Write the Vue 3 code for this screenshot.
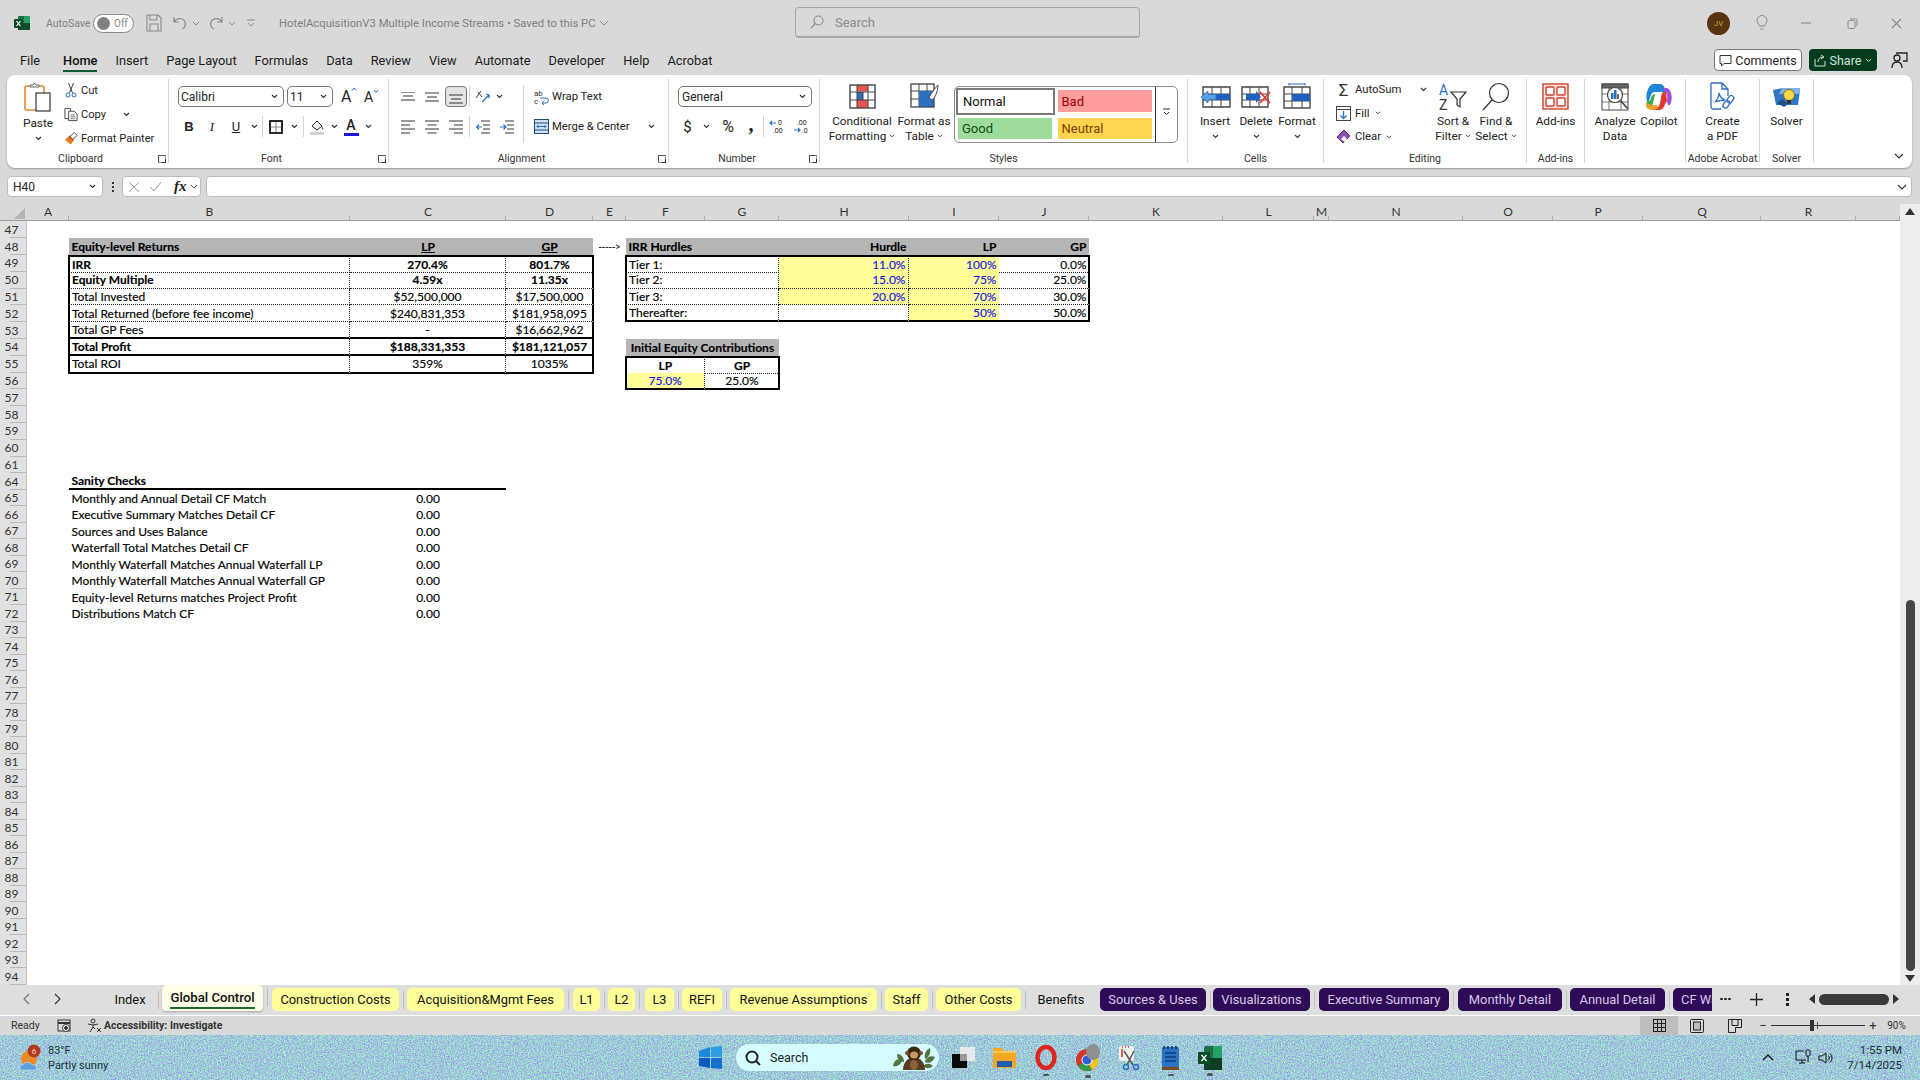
<script setup>
const menu = ['File','Home','Insert','Page Layout','Formulas','Data','Review','View','Automate','Developer','Help','Acrobat']
const colWidths = [42,281,156,87,33,79,74,130,90,90,134,91,15,134,90,90,118,95,44]
const letters = 'ABCDEFGHIJKLMNOPQR'.split('').concat([''])
const cols = colWidths.map(w => w + 'px').join(' ')
const idx = l => letters.indexOf(l) + 2
const c = (col, text, cls = '', span = 1) => ({ col, text, cls, span })
const table = {
  48: [c('B','Equity-level Returns','hd b'),c('C','LP','hd b ctr u'),c('D','GP','hd b ctr u'),c('E','----->','ctr arrow'),c('F','IRR Hurdles','hd b',2),c('H','Hurdle','hd b rgt'),c('I','LP','hd b rgt'),c('J','GP','hd b rgt')],
  49: [c('B','IRR','b tL tT dR dB'),c('C','270.4%','b ctr tT dR dB'),c('D','801.7%','b ctr tT tR dB'),c('F','Tier 1:','tL tT dR dB',2),c('H','11.0%','yel blue rgt tT dR dB'),c('I','100%','yel blue rgt tT dB'),c('J','0.0%','rgt tT tR dB')],
  50: [c('B','Equity Multiple','b tL dR dB'),c('C','4.59x','b ctr dR dB'),c('D','11.35x','b ctr tR dB'),c('F','Tier 2:','tL dR dB',2),c('H','15.0%','yel blue rgt dR dB'),c('I','75%','yel blue rgt dB'),c('J','25.0%','rgt tR dB')],
  51: [c('B','Total Invested','tL dR dB'),c('C','$52,500,000','ctr dR dB'),c('D','$17,500,000','ctr tR dB'),c('F','Tier 3:','tL dR dB',2),c('H','20.0%','yel blue rgt dR dB'),c('I','70%','yel blue rgt dB'),c('J','30.0%','rgt tR dB')],
  52: [c('B','Total Returned (before fee income)','tL dR dB'),c('C','$240,831,353','ctr dR dB'),c('D','$181,958,095','ctr tR dB'),c('F','Thereafter:','tL dR tB',2),c('H','','dR tB'),c('I','50%','yel blue rgt tB'),c('J','50.0%','rgt tR tB')],
  53: [c('B','Total GP Fees','tL dR sB'),c('C','-','ctr dR sB'),c('D','$16,662,962','ctr tR sB')],
  54: [c('B','Total Profit','b tL dR sB'),c('C','$188,331,353','b ctr dR sB'),c('D','$181,121,057','b ctr tR sB'),c('F','Initial Equity Contributions','hd b ctr',2)],
  55: [c('B','Total ROI','tL dR tB'),c('C','359%','ctr dR tB'),c('D','1035%','ctr tR tB'),c('F','LP','b ctr tL tT dR dB'),c('G','GP','b ctr tT tR dB')],
  56: [c('F','75.0%','yel blue ctr tL dR tB'),c('G','25.0%','ctr tR tB')],
  64: [c('B','Sanity Checks','b sB'),c('C','','sB')]
}
const sanity = ['Monthly and Annual Detail CF Match','Executive Summary Matches Detail CF','Sources and Uses Balance','Waterfall Total Matches Detail CF','Monthly Waterfall Matches Annual Waterfall LP','Monthly Waterfall Matches Annual Waterfall GP','Equity-level Returns matches Project Profit','Distributions Match CF']
sanity.forEach((s, i) => { table[65 + i] = [c('B', s), c('C', '0.00', 'ctr')] })
const rowNums = []
for (let n = 47; n <= 94; n++) if (n !== 62 && n !== 63) rowNums.push(n)
const rows = rowNums.map(n => ({ n, cells: table[n] || [], style: { height: (n < 62 ? 16.8 : 16.5) + 'px' } }))
const cellStyle = x => ({ gridColumn: idx(x.col) - 1 + ' / span ' + x.span })

const rawTabs = [
  ['Index',106,48,'plain'],['Global Control',162,101,'active'],['Construction Costs',272,127,'yellow'],['Acquisition&Mgmt Fees',407,157,'yellow'],['L1',573,27,'yellow'],['L2',608,27,'yellow'],['L3',645,29,'yellow'],['REFI',682,40,'yellow'],['Revenue Assumptions',730,147,'yellow'],['Staff',885,43,'yellow'],['Other Costs',936,85,'yellow'],['Benefits',1024,74,'plain'],['Sources & Uses',1100,106,'purple'],['Visualizations',1213,97,'purple'],['Executive Summary',1319,130,'purple'],['Monthly Detail',1458,104,'purple'],['Annual Detail',1570,95,'purple'],['CF Waterfall',1673,80,'purple']
]
const tabs = rawTabs.map((t, i) => {
  const prevEnd = i ? rawTabs[i - 1][1] + rawTabs[i - 1][2] : 90
  return { name: t[0], kind: t[3], style: { width: t[2] + 'px', marginLeft: t[1] - prevEnd + 'px' } }
})
</script>

<template>
  <div class="app">
    <header class="title">
      <div class="tleft">
        <svg class="xl" width="16" height="16" viewBox="0 0 16 16"><rect x="4" y="1" width="12" height="14" rx="1" fill="#1d6f42"/><rect x="10" y="1" width="6" height="7" fill="#21a366"/><rect x="4" y="8" width="12" height="7" fill="#124a2c"/><rect x="0" y="4" width="9" height="9" rx="1" fill="#0b4a26"/><path d="M2.5 6l4 5M6.5 6l-4 5" stroke="#fff" stroke-width="1.2"/></svg>
        <span class="asave">AutoSave</span>
        <span class="toggle"><i></i><b>Off</b></span>
        <svg class="qs" width="16" height="18" viewBox="0 0 16 18" fill="none" stroke="#8a8a8a" stroke-width="1.1"><path d="M1 1h11l3 3v13H1z"/><path d="M4 1v5h7V1M4 17v-7h8v7"/></svg>
        <svg class="qu" width="16" height="16" viewBox="0 0 16 16" fill="none" stroke="#8a8a8a" stroke-width="1.2"><path d="M2 2v5h5M2 7c2-3 5-4 8-3 3 1 4 4 3 7-.5 1.500-1.500 2.500-3 3"/></svg>
        <svg class="qc" width="8" height="5" viewBox="0 0 8 5" fill="none" stroke="#8a8a8a"><path d="M1 1l3 3 3-3"/></svg>
        <svg class="qr" width="16" height="16" viewBox="0 0 16 16" fill="none" stroke="#8a8a8a" stroke-width="1.2"><path d="M14 2v5H9M14 7c-2-3-5-4-8-3-3 1-4 4-3 7 .5 1.500 1.500 2.500 3 3"/></svg>
        <svg class="qc" width="8" height="5" viewBox="0 0 8 5" fill="none" stroke="#8a8a8a"><path d="M1 1l3 3 3-3"/></svg>
        <svg class="qz" width="10" height="10" viewBox="0 0 10 10" fill="none" stroke="#8a8a8a"><path d="M1 2h8M2 5l3 3 3-3"/></svg>
        <span class="fname">HotelAcquisitionV3 Multiple Income Streams  •  Saved to this PC</span>
        <svg class="qc2" width="10" height="6" viewBox="0 0 10 6" fill="none" stroke="#8a8a8a"><path d="M1 1l4 4 4-4"/></svg>
      </div>
      <div class="search">
        <svg width="14" height="14" viewBox="0 0 14 14" fill="none" stroke="#8a8a8a" stroke-width="1.1"><circle cx="8.500" cy="5.500" r="4.500"/><path d="M5 9l-4 4"/></svg>
        <span>Search</span>
      </div>
      <div class="tright">
        <span class="avatar">JV</span>
        <svg class="bulb" width="12" height="16" viewBox="0 0 12 16" fill="none" stroke="#8a8a8a"><path d="M3.500 11C3 9 1 8 1 5.500a5 5 0 0 1 10 0C11 8 9 9 8.500 11zM4.500 14h3"/></svg>
        <svg class="wmin" width="10" height="2" viewBox="0 0 10 2"><path d="M0 1h10" stroke="#9a9a9a" stroke-width="1.4"/></svg>
        <svg class="wmax" width="11" height="11" viewBox="0 0 11 11" fill="none" stroke="#8a8a8a"><rect x="1" y="2.500" width="7" height="8" rx="1.500"/><path d="M3 1h5.500a1.500 1.500 0 0 1 1.500 1.500V8"/></svg>
        <svg class="wcl" width="11" height="11" viewBox="0 0 11 11" stroke="#8a8a8a" stroke-width="1.1"><path d="M1 1l9 9M10 1l-9 9"/></svg>
      </div>
    </header>

    <nav class="menu">
      <ul>
        <li v-for="m in menu" :key="m" :class="{ on: m === 'Home' }">{{ m }}</li>
      </ul>
      <div class="mright">
        <span class="comments"><svg width="13" height="13" viewBox="0 0 13 13" fill="none" stroke="#333"><path d="M1 1.500h11v8H5l-2.500 2.500V9.500H1z"/></svg>Comments</span>
        <span class="share"><svg width="12" height="13" viewBox="0 0 12 13" fill="none" stroke="#cfe6d6"><path d="M1 5v7h10V7M4 8c0-3 2-5 5-5M7 1l3 2-3 2"/></svg>Share<svg width="7" height="5" viewBox="0 0 7 5" fill="none" stroke="#cfe6d6"><path d="M1 1l2.500 2.500L6 1"/></svg></span>
        <svg class="present" width="17" height="20" viewBox="0 0 17 20" fill="none" stroke="#222" stroke-width="1.300"><path d="M5 3h11v8h-4"/><circle cx="6" cy="8" r="3"/><path d="M1 18c0-4 2-6 5-6s5 2 5 6"/></svg>
      </div>
    </nav>

    <section class="ribbon">
      <!-- Clipboard -->
      <div class="grp g-clip">
        <div class="body clipb">
          <div class="big pastecol">
            <svg width="28" height="30" viewBox="0 0 28 30"><rect x="1" y="4" width="19" height="24" rx="1.500" fill="#fff" stroke="#e8862a" stroke-width="1.600"/><path d="M6 5V3h3l1.500-2L12 3h3v2z" fill="#fff" stroke="#666"/><rect x="12" y="11" width="14" height="18" fill="#fff" stroke="#444" stroke-width="1.300"/></svg>
            <span class="lbl pastel">Paste</span>
            <svg class="chev" width="7" height="5" viewBox="0 0 7 5"><path d="M1 1l2.500 2.500L6 1" fill="none" stroke="#333" stroke-width="1.100"/></svg>
          </div>
          <div class="small">
            <div class="srow"><svg width="12" height="16" viewBox="0 0 12 16" fill="none" stroke="#444"><path d="M3.500 1L7.500 11M8.500 1L4.500 11"/><circle cx="3" cy="13" r="2" stroke="#2a6fc0"/><circle cx="9" cy="13" r="2" stroke="#2a6fc0"/></svg><span>Cut</span></div>
            <div class="srow"><svg width="15" height="15" viewBox="0 0 15 15" fill="none" stroke="#444"><path d="M1 1h6v11H1z"/><path d="M5 4h6l3 3v7H5z" fill="#fff"/><path d="M7 8h5M7 10h5M7 12h5" stroke="#777"/></svg><span>Copy</span><svg class="copyc" width="7" height="5" viewBox="0 0 7 5"><path d="M1 1l2.500 2.500L6 1" fill="none" stroke="#333" stroke-width="1.100"/></svg></div>
            <div class="srow"><svg width="15" height="15" viewBox="0 0 15 15"><path d="M1 9l5-5 5 5-4 5z" fill="#ea7a28"/><path d="M6 6l5-5 3 3-5 5z" fill="none" stroke="#444"/></svg><span>Format Painter</span></div>
          </div>
        </div>
        <div class="glab lw">Clipboard<i class="launch"></i></div>
      </div>

      <!-- Font -->
      <div class="grp g-font">
        <div class="body stack">
          <div class="row r1">
            <span class="box fbox">Calibri<svg width="7" height="5" viewBox="0 0 7 5"><path d="M1 1l2.500 2.500L6 1" fill="none" stroke="#333" stroke-width="1.100"/></svg></span>
            <span class="box sbox">11<svg width="7" height="5" viewBox="0 0 7 5"><path d="M1 1l2.500 2.500L6 1" fill="none" stroke="#333" stroke-width="1.100"/></svg></span>
            <span class="ab big-a">A<svg width="6" height="4" viewBox="0 0 6 4"><path d="M1 3.500L3 1l2 2.500" fill="none" stroke="#2a6fc0"/></svg></span>
            <span class="ab small-a">A<svg width="6" height="4" viewBox="0 0 6 4"><path d="M1 1l2 2.500L5 1" fill="none" stroke="#2a6fc0"/></svg></span>
          </div>
          <div class="row r2">
            <span class="t w22 bold">B</span>
            <span class="t w24 ital">I</span>
            <span class="t w24 und">U</span>
            <span class="w12 ctrf"><svg width="7" height="5" viewBox="0 0 7 5"><path d="M1 1l2.500 2.500L6 1" fill="none" stroke="#333" stroke-width="1.100"/></svg></span>
            <i class="vsep"></i>
            <span class="w22 ctrf"><svg width="14" height="14" viewBox="0 0 14 14" fill="none"><rect x="1" y="1" width="12" height="12" stroke="#111" stroke-width="1.800"/><path d="M7 2v10M2 7h10" stroke="#888"/></svg></span>
            <span class="w14 ctrf"><svg width="7" height="5" viewBox="0 0 7 5"><path d="M1 1l2.500 2.500L6 1" fill="none" stroke="#333" stroke-width="1.100"/></svg></span>
            <i class="vsep"></i>
            <span class="w22 ctrf"><svg width="15" height="16" viewBox="0 0 15 16"><path d="M2 7l5-5 5 5-5 4z" fill="none" stroke="#222"/><path d="M12 7c1 2 2 2.500 1 3.500-1 .5-1.500-1-1-3.500z" fill="#2a6fc0"/><rect x="0" y="13" width="14" height="3" fill="#d0d0d0"/></svg></span>
            <span class="w12 ctrf"><svg width="7" height="5" viewBox="0 0 7 5"><path d="M1 1l2.500 2.500L6 1" fill="none" stroke="#333" stroke-width="1.100"/></svg></span>
            <span class="w22 colA"><b>A</b><i></i></span>
            <span class="w12 ctrf"><svg width="7" height="5" viewBox="0 0 7 5"><path d="M1 1l2.500 2.500L6 1" fill="none" stroke="#333" stroke-width="1.100"/></svg></span>
          </div>
        </div>
        <div class="glab lw">Font<i class="launch"></i></div>
      </div>

      <!-- Alignment -->
      <div class="grp g-align">
        <div class="body alignb">
          <div class="stack alignl">
            <div class="row r1">
              <span class="w24 ctrf"><svg width="14" height="10" viewBox="0 0 14 10" stroke="#333"><path d="M0 .5h14M2 4.500h10M0 8.500h14" transform="translate(0 -0.500)"/></svg></span>
              <span class="w24 ctrf"><svg width="14" height="10" viewBox="0 0 14 10" stroke="#333"><path d="M0 1h14M2 5h10M0 9h14"/></svg></span>
              <span class="w24 ctrf pressed"><svg width="14" height="10" viewBox="0 0 14 10" stroke="#333"><path d="M0 1h14M2 5h10M0 9h14"/></svg></span>
              <i class="vsep"></i>
              <span class="w24 ctrf"><svg width="16" height="14" viewBox="0 0 16 14" fill="none" stroke="#444"><path d="M1 8l5-7M3 2l4 5"/><path d="M7 12l7-7M11 4l3 1v3" stroke="#2a6fc0" stroke-width="1.300"/></svg></span>
              <span class="w8 ctrf"><svg width="7" height="5" viewBox="0 0 7 5"><path d="M1 1l2.500 2.500L6 1" fill="none" stroke="#333" stroke-width="1.100"/></svg></span>
            </div>
            <div class="row r2">
              <span class="w24 ctrf"><svg width="14" height="14" viewBox="0 0 14 14" stroke="#333"><path d="M0 1h14M0 5h9M0 9h14M0 13h9"/></svg></span>
              <span class="w24 ctrf"><svg width="14" height="14" viewBox="0 0 14 14" stroke="#333"><path d="M0 1h14M2.500 5h9M0 9h14M2.500 13h9"/></svg></span>
              <span class="w24 ctrf"><svg width="14" height="14" viewBox="0 0 14 14" stroke="#333"><path d="M0 1h14M5 5h9M0 9h14M5 13h9"/></svg></span>
              <i class="vsep"></i>
              <span class="w24 ctrf"><svg width="14" height="14" viewBox="0 0 14 14" fill="none" stroke="#333"><path d="M5 1h9M7 5h7M7 9h7M5 13h9"/><path d="M6 7H0M3 4.500L.5 7 3 9.500" stroke="#2a6fc0" stroke-width="1.200"/></svg></span>
              <span class="w24 ctrf"><svg width="14" height="14" viewBox="0 0 14 14" fill="none" stroke="#333"><path d="M5 1h9M7 5h7M7 9h7M5 13h9"/><path d="M0 7h6M3.500 4.500L6 7 3.500 9.500" stroke="#2a6fc0" stroke-width="1.200"/></svg></span>
            </div>
          </div>
          <i class="bigsep"></i>
          <div class="stack alignr">
            <div class="srow2"><svg width="15" height="16" viewBox="0 0 15 16" fill="none"><text x="0" y="7" font-size="8" font-family="Roboto" fill="#333">ab</text><text x="0" y="15" font-size="8" font-family="Roboto" fill="#333">c</text><path d="M6 9h6a2 2 0 0 1 0 5H8M10 12l-2 2 2 2" stroke="#2a6fc0"/></svg><span>Wrap Text</span></div>
            <div class="srow2 merge"><svg width="15" height="15" viewBox="0 0 15 15" fill="none" stroke="#1f4e79"><rect x=".5" y=".5" width="14" height="14" fill="#cfe0f3"/><path d="M.5 4h14M.5 11h14"/><path d="M3 7.500h9M4.500 6l-1.500 1.500L4.500 9M10.500 6l1.500 1.500L10.500 9" stroke="#2a6fc0"/></svg><span>Merge &amp; Center</span><svg class="mc" width="7" height="5" viewBox="0 0 7 5"><path d="M1 1l2.500 2.500L6 1" fill="none" stroke="#333" stroke-width="1.100"/></svg></div>
          </div>
        </div>
        <div class="glab lw">Alignment<i class="launch"></i></div>
      </div>

      <!-- Number -->
      <div class="grp g-num">
        <div class="body stack">
          <div class="row r1"><span class="box gbox">General<svg width="7" height="5" viewBox="0 0 7 5"><path d="M1 1l2.500 2.500L6 1" fill="none" stroke="#333" stroke-width="1.100"/></svg></span></div>
          <div class="row r2">
            <span class="t w24 numg">$</span>
            <span class="w12 ctrf"><svg width="7" height="5" viewBox="0 0 7 5"><path d="M1 1l2.500 2.500L6 1" fill="none" stroke="#333" stroke-width="1.100"/></svg></span>
            <span class="t w24 numg pct">%</span>
            <span class="t w22 numg comma">,</span>
            <i class="vsep"></i>
            <span class="w24 ctrf"><svg width="16" height="15" viewBox="0 0 16 15"><text x="9" y="6" font-size="7" font-family="Roboto" fill="#222">0</text><text x="4" y="14" font-size="7" font-family="Roboto" fill="#222">.00</text><path d="M7 4H1M3 2L1 4l2 2" fill="none" stroke="#2a6fc0" stroke-width="1.200"/></svg></span>
            <span class="w24 ctrf"><svg width="16" height="15" viewBox="0 0 16 15"><text x="4" y="6" font-size="7" font-family="Roboto" fill="#222">.00</text><text x="9" y="14" font-size="7" font-family="Roboto" fill="#222">.0</text><path d="M1 11h6M5 9l2 2-2 2" fill="none" stroke="#2a6fc0" stroke-width="1.200"/></svg></span>
          </div>
        </div>
        <div class="glab lw">Number<i class="launch"></i></div>
      </div>

      <!-- Styles -->
      <div class="grp g-sty">
        <div class="body styb">
          <div class="big w64">
            <div class="bi"><svg width="27" height="25" viewBox="0 0 27 25"><rect x="1" y="1" width="25" height="23" fill="#fff"/><rect x="8" y="1" width="11" height="6.500" fill="#e8564e"/><rect x="8" y="8" width="6" height="8" fill="#2a6fc0"/><rect x="8" y="16" width="11" height="8" fill="#e8564e"/><path d="M1 8h25M1 16h25M8 1v23M14 8v8M19 1v23" stroke="#444" stroke-width="1"/><rect x="1" y="1" width="25" height="23" fill="none" stroke="#444" stroke-width="1.400"/></svg></div>
            <span class="lbl">Conditional</span>
            <span class="lbl">Formatting<svg class="ch" width="6" height="4" viewBox="0 0 7 5"><path d="M1 1l2.500 2.500L6 1" fill="none" stroke="#333" stroke-width="1.200"/></svg></span>
          </div>
          <div class="big w56">
            <div class="bi"><svg width="29" height="28" viewBox="0 0 29 28"><rect x="1" y="1" width="23" height="23" fill="#fff"/><path d="M1 8h23M1 16h23M9 1v23M17 1v23" stroke="#444"/><rect x="9" y="8" width="15" height="16" fill="#2a6fc0"/><rect x="1" y="1" width="23" height="23" fill="none" stroke="#444" stroke-width="1.300"/><path d="M28 2c-3 3-8 10-9 13l3 2c3-2 6-9 6-15z" fill="#fff" stroke="#444"/><path d="M19 15c-3 0-4 2-4 5-1 2-3 2-4 2 3 3 9 3 11-5z" fill="#2a6fc0"/></svg></div>
            <span class="lbl">Format as</span>
            <span class="lbl">Table<svg class="ch" width="6" height="4" viewBox="0 0 7 5"><path d="M1 1l2.500 2.500L6 1" fill="none" stroke="#333" stroke-width="1.200"/></svg></span>
          </div>
          <div class="gallery">
            <div class="gcells">
              <span class="st normal">Normal</span><span class="st bad">Bad</span>
              <span class="st good">Good</span><span class="st neutral">Neutral</span>
            </div>
            <div class="gbtn"><svg width="9" height="8" viewBox="0 0 9 8" fill="none" stroke="#333"><path d="M1 1h7M2 4l2.500 2.500L7 4"/></svg></div>
          </div>
        </div>
        <div class="glab">Styles</div>
      </div>

      <!-- Cells -->
      <div class="grp g-cells">
        <div class="body cellb">
          <div class="big w40">
            <div class="bi"><svg width="31" height="22" viewBox="0 0 31 22"><path d="M3 1h27v20H3z" fill="#fff" stroke="#444" stroke-width="1.400"/><path d="M3 8h27M3 14h27M12 1v20M21 1v20" stroke="#444"/><rect x="12" y="8" width="18" height="6" fill="#1e5fc0"/><path d="M1 11l7-6v3.500h8v5H8V17z" fill="#5aa0e6" stroke="#2a6fc0" stroke-width=".8"/></svg></div>
            <span class="lbl">Insert</span>
            <svg class="chev" width="7" height="5" viewBox="0 0 7 5"><path d="M1 1l2.500 2.500L6 1" fill="none" stroke="#333" stroke-width="1.100"/></svg>
          </div>
          <div class="big w40">
            <div class="bi"><svg width="30" height="22" viewBox="0 0 30 22"><path d="M1 1h26v20H1z" fill="#fff" stroke="#444" stroke-width="1.400"/><path d="M1 8h26M1 14h26M9 1v20M18 1v20" stroke="#444"/><path d="M5 8h10V5l5 6-5 6v-3H5z" fill="#1e5fc0"/><path d="M19 6l10 11M29 6L19 17" stroke="#e8362a" stroke-width="1.700"/></svg></div>
            <span class="lbl">Delete</span>
            <svg class="chev" width="7" height="5" viewBox="0 0 7 5"><path d="M1 1l2.500 2.500L6 1" fill="none" stroke="#333" stroke-width="1.100"/></svg>
          </div>
          <div class="big w40 fmt">
            <div class="bi"><svg width="28" height="26" viewBox="0 0 28 26"><path d="M6 1h16M6 0v2.500M22 0v2.500" stroke="#2a6fc0"/><rect x="1" y="4" width="26" height="21" fill="#fff" stroke="#444" stroke-width="1.400"/><path d="M1 11h26M1 18h26M9 4v21M19 4v21" stroke="#444"/><rect x="9" y="11" width="18" height="7" fill="#1e5fc0"/></svg></div>
            <span class="lbl">Format</span>
            <svg class="chev" width="7" height="5" viewBox="0 0 7 5"><path d="M1 1l2.500 2.500L6 1" fill="none" stroke="#333" stroke-width="1.100"/></svg>
          </div>
        </div>
        <div class="glab">Cells</div>
      </div>

      <!-- Editing -->
      <div class="grp g-edit">
        <div class="body editb">
          <div class="small editl">
            <div class="srow3"><span class="sig">Σ</span><span>AutoSum</span><svg class="asc" width="7" height="5" viewBox="0 0 7 5"><path d="M1 1l2.500 2.500L6 1" fill="none" stroke="#333" stroke-width="1.100"/></svg></div>
            <div class="srow3"><svg width="15" height="15" viewBox="0 0 15 15" fill="none"><rect x=".5" y=".5" width="14" height="14" stroke="#444"/><path d="M.5 3.500h14" stroke="#444"/><path d="M7.500 5v7M4.500 9.500l3 3 3-3" stroke="#2a6fc0" stroke-width="1.300"/></svg><span>Fill</span><svg class="ch" width="6" height="4" viewBox="0 0 7 5"><path d="M1 1l2.500 2.500L6 1" fill="none" stroke="#333" stroke-width="1.200"/></svg></div>
            <div class="srow3"><svg width="15" height="15" viewBox="0 0 15 15"><path d="M8 1l6 6-7 7-6-6z" fill="#8c52b8" stroke="#5b2f86"/><path d="M5 10l3-3 3 3-2 3z" fill="#fff"/></svg><span>Clear</span><svg class="ch" width="6" height="4" viewBox="0 0 7 5"><path d="M1 1l2.500 2.500L6 1" fill="none" stroke="#333" stroke-width="1.200"/></svg></div>
          </div>
          <div class="big w44">
            <div class="bi"><svg width="30" height="30" viewBox="0 0 30 30"><text x="1" y="13" font-size="14" font-family="Roboto" fill="#2a6fc0">A</text><text x="1" y="28" font-size="14" font-family="Roboto" fill="#333">Z</text><path d="M13 10h15l-6 7v8l-3-2v-6z" fill="#fff" stroke="#333" stroke-width="1.200"/></svg></div>
            <span class="lbl">Sort &amp;</span>
            <span class="lbl">Filter<svg class="ch" width="6" height="4" viewBox="0 0 7 5"><path d="M1 1l2.500 2.500L6 1" fill="none" stroke="#333" stroke-width="1.200"/></svg></span>
          </div>
          <div class="big w44">
            <div class="bi"><svg width="30" height="30" viewBox="0 0 30 30" fill="none" stroke="#333" stroke-width="1.200"><circle cx="18" cy="11" r="9.500"/><path d="M11 18L2 28"/></svg></div>
            <span class="lbl">Find &amp;</span>
            <span class="lbl">Select<svg class="ch" width="6" height="4" viewBox="0 0 7 5"><path d="M1 1l2.500 2.500L6 1" fill="none" stroke="#333" stroke-width="1.200"/></svg></span>
          </div>
        </div>
        <div class="glab">Editing</div>
      </div>

      <!-- Add-ins -->
      <div class="grp g-add">
        <div class="body onec">
          <div class="big">
            <div class="bi"><svg width="27" height="27" viewBox="0 0 27 27" fill="#fff" stroke="#d0402a" stroke-width="1.400"><rect x="1" y="1" width="25" height="25" fill="#fbe3df"/><rect x="4" y="4" width="8" height="8" rx="1"/><rect x="15" y="4" width="8" height="8" rx="1"/><rect x="4" y="15" width="8" height="8" rx="1"/><rect x="15" y="15" width="8" height="8" rx="1"/></svg></div>
            <span class="lbl">Add-ins</span>
          </div>
        </div>
        <div class="glab">Add-ins</div>
      </div>

      <!-- Analyze -->
      <div class="grp g-ana">
        <div class="body anab">
          <div class="big w44">
            <div class="bi"><svg width="28" height="28" viewBox="0 0 28 28" fill="none" stroke="#444"><rect x="1" y="1" width="26" height="26" fill="#fff"/><rect x="1" y="1" width="26" height="4" fill="#666"/><path d="M1 11h26M1 19h26M8 5v22M20 5v22" stroke-width=".7"/><circle cx="14" cy="12" r="7.500" fill="#fff" stroke-width="1.200"/><rect x="10" y="10" width="2.500" height="6" fill="#2a6fc0" stroke="none"/><rect x="13" y="7" width="2.500" height="9" fill="#2a6fc0" stroke="none"/><rect x="16" y="11" width="2" height="5" fill="#666" stroke="none"/><path d="M19.500 17.500l7 8" stroke-width="1.600"/></svg></div>
            <span class="lbl">Analyze</span>
            <span class="lbl">Data</span>
          </div>
          <div class="big w44">
            <div class="bi"><svg width="28" height="28" viewBox="0 0 28 28"><path d="M8 1h7c3 0 4 2 5 5l1 3H10c-2 0-3 1-4 3l-2 6H2C0 12 3 2 8 1z" fill="#1f86d8"/><path d="M2 18h3l1-3c1-3 2-4 4-4l-2 9c-1 5-3 7-6 5-1-2-1-4 0-7z" fill="#3ea84b"/><path d="M1 20c0 4 2 7 6 7h7l-2-5H7z" fill="#f2a12b"/><path d="M17 5h5c5 2 6 11 3 17h-2l-1-4c1-4 0-10-5-13z" fill="#a04fd6"/><path d="M18 9h3l1 9-2 3c-1 4-3 6-6 6H9c4-1 5-4 6-7l1-5c0-3 1-5 2-6z" fill="#e0392d"/></svg></div>
            <span class="lbl">Copilot</span>
          </div>
        </div>
        <div class="glab">&nbsp;</div>
      </div>

      <!-- Adobe -->
      <div class="grp g-ado">
        <div class="body onec">
          <div class="big">
            <div class="bi"><svg width="26" height="30" viewBox="0 0 26 30" fill="none" stroke="#2a6fc0" stroke-width="1.300"><path d="M2 1h11l6 6v7M12 27H4a2 2 0 0 1-2-2V1M13 1v6h6"/><path d="M6 20c3-3 4-7 4-9 1 4 3 6 6 7-3 0-7 1-10 2z"/><rect x="15" y="18" width="5" height="8" rx="2.500" transform="rotate(35 17 22)"/><rect x="19" y="13" width="5" height="8" rx="2.500" transform="rotate(35 21 17)"/></svg></div>
            <span class="lbl">Create</span>
            <span class="lbl">a PDF</span>
          </div>
        </div>
        <div class="glab">Adobe Acrobat</div>
      </div>

      <!-- Solver -->
      <div class="grp g-sol">
        <div class="body onec">
          <div class="big">
            <div class="bi"><svg width="30" height="24" viewBox="0 0 30 24"><path d="M1 5l10-2 2 2h15l-2 15H4z" fill="#2f76c4"/><path d="M10 3h18v6H7z" fill="#7fb2e6"/><path d="M5 18l5-4 6 5-4 3z" fill="#1f4e8c"/><circle cx="17" cy="10" r="5.500" fill="#f6d64a" stroke="#8a6b10"/><rect x="15" y="15" width="4" height="4" fill="#333"/></svg></div>
            <span class="lbl">Solver</span>
          </div>
        </div>
        <div class="glab">Solver</div>
      </div>
      <svg class="collapse" width="10" height="6" viewBox="0 0 10 6" fill="none" stroke="#333" stroke-width="1.200"><path d="M1 1l4 4 4-4"/></svg>
    </section>

    <div class="fbar">
      <div class="namebox"><span>H40</span><svg width="7" height="5" viewBox="0 0 7 5"><path d="M1 1l2.500 2.500L6 1" fill="none" stroke="#333" stroke-width="1.200"/></svg></div>
      <div class="fdots"><i></i><i></i><i></i></div>
      <div class="fxbox">
        <svg width="12" height="12" viewBox="0 0 12 12" stroke="#999"><path d="M1 1l10 10M11 1L1 11"/></svg>
        <svg width="13" height="11" viewBox="0 0 13 11" fill="none" stroke="#999"><path d="M1 6l4 4 7-9"/></svg>
        <span class="fx">fx</span>
        <svg width="8" height="5" viewBox="0 0 8 5" fill="none" stroke="#555"><path d="M1 1l3 3 3-3"/></svg>
      </div>
      <div class="finput"><svg width="10" height="6" viewBox="0 0 10 6" fill="none" stroke="#333" stroke-width="1.100"><path d="M1 1l4 4 4-4"/></svg></div>
    </div>

    <main class="sheet">
      <div class="grid">
        <div class="colhead">
          <div class="corner"><i></i></div>
          <div class="letters" :style="{ gridTemplateColumns: cols }">
            <span v-for="l in letters" :key="l">{{ l }}</span>
          </div>
        </div>
        <div v-for="r in rows" :key="r.n" class="line" :style="r.style">
          <div class="rh">{{ r.n }}</div>
          <div class="cells" :style="{ gridTemplateColumns: cols }">
            <div v-for="x in r.cells" :key="x.col" class="c" :class="x.cls" :style="cellStyle(x)">{{ x.text }}</div>
          </div>
        </div>
      </div>
      <aside class="vscroll">
        <i class="tri up"></i>
        <div class="vtrack"><i class="vthumb"></i></div>
        <i class="tri dn"></i>
      </aside>
    </main>

    <div class="tabbar">
      <div class="tnav">
        <svg width="7" height="12" viewBox="0 0 7 12" fill="none" stroke="#777" stroke-width="1.200"><path d="M6 1L1 6l5 5"/></svg>
        <svg width="7" height="12" viewBox="0 0 7 12" fill="none" stroke="#333" stroke-width="1.200"><path d="M1 1l5 5-5 5"/></svg>
      </div>
      <div class="tstrip">
        <div v-for="t in tabs" :key="t.name" class="tab" :class="t.kind" :style="t.style"><span>{{ t.name }}</span></div>
      </div>
      <div class="tctl">
        <span class="more"><i></i><i></i><i></i></span>
        <svg class="plus" width="13" height="13" viewBox="0 0 13 13" stroke="#222" stroke-width="1.300"><path d="M6.500 0v13M0 6.500h13"/></svg>
        <span class="vdots"><i></i><i></i><i></i></span>
        <div class="hscroll"><i class="tl"></i><i class="hthumb"></i><i class="tr"></i></div>
      </div>
    </div>

    <footer class="status">
      <span class="ready">Ready</span>
      <svg class="macro" width="15" height="14" viewBox="0 0 15 14" fill="none" stroke="#333"><rect x="1" y="1" width="12" height="11"/><path d="M1 4h12" stroke-width="2"/><circle cx="9" cy="9" r="3.500" fill="#fff"/><circle cx="9" cy="9" r="1.500" fill="#333"/></svg>
      <svg class="acc" width="15" height="15" viewBox="0 0 15 15" fill="none" stroke="#333"><circle cx="6" cy="3" r="2"/><path d="M1 6l5 1 5-1M6 7v2l-3 5M6 9l2 2M10 10l4 4M14 10l-4 4"/></svg>
      <span class="accT">Accessibility: Investigate</span>
      <div class="sright">
        <span class="vb on"><svg width="13" height="13" viewBox="0 0 13 13" stroke="#222"><rect x=".5" y=".5" width="12" height="12" fill="none"/><path d="M4.500 0v13M8.500 0v13M0 4.500h13M0 8.500h13"/></svg></span>
        <span class="vb"><svg width="14" height="14" viewBox="0 0 14 14" fill="none" stroke="#222"><rect x=".5" y=".5" width="13" height="13" rx="1"/><rect x="3.500" y="3" width="7" height="8" fill="#bbb"/></svg></span>
        <span class="vb"><svg width="14" height="14" viewBox="0 0 14 14" fill="none" stroke="#222"><path d="M.5.500h13v8h-6v5h-7z"/><path d="M4 .5v6h6V.5"/></svg></span>
        <span class="zm">−</span>
        <div class="zslider"><i class="ztick"></i><i class="zthumb"></i></div>
        <span class="zm">+</span>
        <span class="zpct">90%</span>
      </div>
    </footer>

    <div class="taskbar">
      <svg class="noise" width="1920" height="45"><filter id="tbn" x="0" y="0" width="100%" height="100%" color-interpolation-filters="sRGB"><feTurbulence type="fractalNoise" baseFrequency="0.7" numOctaves="2" seed="4"/><feColorMatrix type="matrix" values="0 0 0 0 0.620  -0.900 0 0 0 1.240  0.400 0 0 0 0.650  0 0 0 0 1"/></filter><rect width="1920" height="45" filter="url(#tbn)"/></svg>
      <div class="weather">
        <svg width="24" height="28" viewBox="0 0 24 28"><circle cx="10" cy="15" r="8" fill="#ee8a2a"/><path d="M3 26c-3 0-3-5 1-5 1-3 7-4 9 0 5-1 6 5 2 5z" fill="#5a9fe0" stroke="#cfe4f8" stroke-width=".6"/><circle cx="15" cy="7" r="6.500" fill="#b23a1e"/><text x="15" y="10" text-anchor="middle" font-size="8" font-family="Roboto" fill="#f8d8b8">6</text></svg>
        <div class="wtext"><span>83°F</span><span>Partly sunny</span></div>
      </div>
      <div class="tcenter">
        <svg class="ms" width="23" height="23" viewBox="0 0 23 23"><path d="M0 5l11-4v10H0z" fill="#1a8ad8"/><path d="M12 1l11-1v11H12z" fill="#2f9ce6"/><path d="M0 12h11v10L0 20z" fill="#0c5cc0"/><path d="M12 12h11v11l-11-1z" fill="#1470d0"/></svg>
        <div class="tsearch">
          <svg width="16" height="16" viewBox="0 0 16 16" fill="none" stroke="#222" stroke-width="2"><circle cx="7" cy="7" r="5.500"/><path d="M11 11l4 4"/></svg>
          <span>Search</span>
          <svg class="monkey" width="44" height="25" viewBox="0 0 44 25"><g fill="#55743f"><path d="M1 21c1-6 5-8 9-6-1 5-5 7-9 6z"/><path d="M5 9c4 0 7 3 7 8-4 0-7-3-7-8z"/><path d="M43 12c-2 5-6 7-10 5 1-5 6-7 10-5z"/><path d="M38 3c1 5-1 9-5 11-1-5 1-9 5-11z"/><path d="M41 21c-3 3-7 3-10 0 3-3 7-3 10 0z"/></g><path d="M11 25c0-6 3-9 5-11h12c2 2 5 5 5 11z" fill="#5a3a20"/><circle cx="22" cy="8.500" r="7" fill="#3f2610"/><circle cx="15" cy="8" r="2" fill="#7a5230"/><circle cx="29" cy="8" r="2" fill="#7a5230"/><ellipse cx="22" cy="10" rx="4" ry="3.500" fill="#c89a6a"/><ellipse cx="22" cy="20" rx="4" ry="5" fill="#8a6238"/></svg>
        </div>
        <svg class="tv" width="23" height="21" viewBox="0 0 23 21"><rect x="8" y="0" width="15" height="14" fill="#e8e8e8"/><rect x="0" y="7" width="15" height="14" fill="#0a0a0a"/><rect x="8" y="7" width="7" height="7" fill="#9a9a9a"/></svg>
        <svg class="pin fol" width="23" height="21" viewBox="0 0 23 21"><path d="M0 1h9l2 3h12v17H0z" fill="#f5a623"/><path d="M0 4h23v2H0z" fill="#ffc85a"/><rect x="4" y="14" width="15" height="6" fill="#1f5fae"/></svg>
        <span class="pinw"><svg width="22" height="25" viewBox="0 0 22 25" fill="none"><ellipse cx="11" cy="12.500" rx="8.500" ry="10.500" stroke="#e0241f" stroke-width="4.500"/></svg><i></i></span>
        <span class="pinw"><svg width="24" height="28" viewBox="0 0 24 28"><circle cx="11" cy="16" r="11" fill="#d8352a"/><path d="M11 16L2 22a11 11 0 0 0 14 4z" fill="#2e9e46"/><path d="M11 16l5 10a11 11 0 0 0 5-15z" fill="#f5c11e"/><circle cx="11" cy="16" r="5" fill="#2a5fe0" stroke="#fff"/><ellipse cx="17" cy="8" rx="7" ry="8" fill="#8f8f8f"/></svg><i></i></span>
        <svg class="pin snip" width="24" height="26" viewBox="0 0 24 26" fill="none"><rect x="1" y="1" width="15" height="15" rx="2" fill="#efefef"/><path d="M4 2h1M7 2h1M10 2h1M4 4v8" stroke="#d0402a" stroke-width="1.600"/><path d="M6 6l9 14M16 6l-7 14" stroke="#555" stroke-width="1.400"/><circle cx="8" cy="22" r="2.500" stroke="#2a6fc0" stroke-width="1.400"/><circle cx="18" cy="22" r="2.500" stroke="#2a6fc0" stroke-width="1.400"/></svg>
        <span class="pinw nb"><svg width="17" height="25" viewBox="0 0 17 25"><rect x="0" y="2" width="17" height="21" rx="2" fill="#2a74c8"/><rect x="0" y="22" width="17" height="3" fill="#7a4a20"/><path d="M3 8h11M3 12h11M3 16h11" stroke="#0f3d7a" stroke-width="1.500"/><path d="M2 1v3M6 1v3M10 1v3M14 1v3" stroke="#123" stroke-width="1.300"/></svg><i></i></span>
        <span class="pinw"><svg width="24" height="24" viewBox="0 0 24 24"><rect x="6" y="0" width="18" height="24" rx="1.500" fill="#1d6f42"/><rect x="15" y="0" width="9" height="12" fill="#21a366"/><rect x="6" y="12" width="18" height="12" fill="#0e3d23"/><rect x="0" y="6" width="12" height="12" rx="1" fill="#0b4a26"/><path d="M3.500 9l5 6M8.500 9l-5 6" stroke="#fff" stroke-width="1.300"/></svg><i></i></span>
      </div>
      <div class="tray">
        <svg width="12" height="7" viewBox="0 0 12 7" fill="none" stroke="#111" stroke-width="1.400"><path d="M1 6l5-5 5 5"/></svg>
        <svg class="net" width="16" height="18" viewBox="0 0 16 18" fill="none" stroke="#111"><path d="M11 11H1V2h8M4 14h6M7 11v3"/><rect x="11" y="1" width="4" height="6" rx="1"/><path d="M13 7v6"/></svg>
        <svg class="vol" width="16" height="14" viewBox="0 0 16 14" fill="none" stroke="#111"><path d="M1 5v4h3l4 3V2L4 5zM10 4.500a3 3 0 0 1 0 5M12 2.500a6 6 0 0 1 0 9"/></svg>
        <div class="clock"><span>1:55 PM</span><span>7/14/2025</span></div>
      </div>
    </div>
  </div>
</template>

<style>
html, body { margin: 0; padding: 0; background: #d9d9d9; }
</style>

<style scoped>
.app { width: 1920px; height: 1080px; overflow: hidden; background: #d9d9d9; display: flex; flex-direction: column; font-family: Roboto, "Open Sans", sans-serif; color: #222; font-size: 12px; }
svg { display: block; flex: none; }
i { display: block; font-style: normal; }

/* title bar */
.title { height: 46px; display: flex; align-items: center; color: #808080; flex: none; }
.tleft { width: 795px; display: flex; align-items: center; padding-left: 14px; box-sizing: border-box; }
.asave { margin-left: 16px; width: 40px; font-size: 10.5px; }
.toggle { margin-left: 7px; width: 41px; height: 19px; box-sizing: border-box; border: 1px solid #8a8a8a; border-radius: 10px; background: #fff; display: flex; align-items: center; padding-left: 3px; font-size: 10px; }
.toggle i { width: 13px; height: 13px; border-radius: 50%; background: #808080; margin-right: 4px; }
.toggle b { font-weight: 400; color: #888; }
.qs { margin-left: 12px; }
.qu { margin-left: 10px; }
.qc { margin-left: 4px; }
.qr { margin-left: 8px; }
.qz { margin-left: 10px; }
.fname { margin-left: 23px; font-size: 11.300px; white-space: pre; width: 315px; }
.qc2 { margin-left: 5px; }
.search { width: 345px; height: 31px; box-sizing: border-box; border: 1px solid #a8a8a8; border-bottom-width: 2px; border-radius: 4px; display: flex; align-items: center; padding-left: 14px; gap: 11px; font-size: 13px; color: #8c8c8c; margin-top: -1px; }
.tright { display: flex; align-items: center; padding-left: 567px; }
.avatar { width: 23px; height: 23px; border-radius: 50%; background: #5a3410; color: #c9a83a; font-size: 8px; display: flex; align-items: center; justify-content: center; }
.bulb { margin-left: 26px; }
.wmin { margin-left: 33px; }
.wmax { margin-left: 36px; }
.wcl { margin-left: 33px; }

/* menu */
.menu { height: 29px; display: flex; align-items: flex-start; flex: none; }
.menu ul { list-style: none; margin: 0; padding: 0 0 0 20px; display: flex; gap: 18px; font-size: 12.800px; color: #1c1c1c; }
.menu li { height: 26px; line-height: 30px; box-sizing: border-box; }
.menu li.on { font-weight: 500; color: #111; border-bottom: 2px solid #0e5c2f; margin-left: 5px; }
.mright { margin-left: auto; margin-top: 3px; display: flex; align-items: center; }
.comments { width: 88px; height: 22px; box-sizing: border-box; background: #fff; border: 1px solid #777; border-radius: 4px; display: flex; align-items: center; justify-content: center; gap: 3px; font-size: 12.5px; }
.share { margin-left: 7px; width: 68px; height: 22px; box-sizing: border-box; background: #063c1e; border-radius: 4px; color: #cfe6d6; display: flex; align-items: center; justify-content: center; gap: 4px; font-size: 12.5px; }
.present { margin: 0 12px 0 14px; }

/* ribbon */
.ribbon { height: 93px; margin: 0 8px 0 7px; background: #fff; border-radius: 8px; box-shadow: 0 1px 2px rgba(0,0,0,.3); display: flex; position: relative; flex: none; }
.grp { margin: 4px 0 5px; height: 84px; box-sizing: border-box; border-right: 1px solid #d6d6d6; display: flex; flex-direction: column; flex: none; }
.body { height: 75px; flex: none; }
.glab { height: 9px; line-height: 10px; text-align: center; font-size: 10.5px; color: #333; position: relative; white-space: nowrap; }
.glab.lw { padding-right: 14px; }
.launch { position: absolute; right: 2px; top: 1px; width: 6px; height: 6px; border-left: 1px solid #555; border-top: 1px solid #555; border-bottom: 1px solid #999; border-right: 1px solid #999; }
.launch::after { content: ""; position: absolute; right: -1px; bottom: -1px; width: 3px; height: 3px; border-right: 1px solid #333; border-bottom: 1px solid #333; }
.g-clip { width: 162px; } .g-font { width: 220px; } .g-align { width: 280px; } .g-num { width: 151px; } .g-sty { width: 368px; } .g-cells { width: 136px; } .g-edit { width: 203px; } .g-add { width: 58px; } .g-ana { width: 101px; } .g-ado { width: 74px; } .g-sol { width: 54px; }
.big { display: flex; flex-direction: column; align-items: center; flex: none; padding-top: .5px; }
.bi { height: 34px; display: flex; align-items: center; justify-content: center; }
.lbl { line-height: 15px; height: 15px; font-size: 11.800px; white-space: nowrap; display: flex; align-items: center; gap: 2px; }
.chev { margin-top: 5px; }
.ch { margin-left: 1px; }
.w40 { width: 40px; } .w44 { width: 44px; } .w56 { width: 56px; } .w64 { width: 64px; }
.fmt .bi { margin-top: -1px; height: 35px; align-items: flex-end; padding-bottom: 5px; box-sizing: border-box; }

.clipb { display: flex; padding-left: 9px; }
.pastecol { width: 44px; padding-top: 3px; }
.pastecol svg:first-child { margin-bottom: 4px; }
.small { margin-left: 4px; margin-top: -1px; }
.srow { height: 24px; display: flex; align-items: center; gap: 3px; font-size: 11.100px; white-space: nowrap; }
.srow > svg:first-child { width: 14px; }
.copyc { margin-left: 14px; }

.stack { display: flex; flex-direction: column; }
.row { display: flex; align-items: center; height: 21px; }
.r1 { margin-top: 7px; }
.r2 { margin-top: 9px; }
.g-font .body { padding-left: 9px; }
.box { height: 21px; box-sizing: border-box; border: 1px solid #777; border-radius: 5px; display: flex; align-items: center; justify-content: space-between; padding: 0 5px 0 2px; font-size: 12px; }
.fbox { width: 106px; }
.sbox { width: 46px; margin-left: 3px; }
.ab { display: flex; font-size: 16px; position: relative; }
.big-a { margin-left: 8px; width: 16px; }
.small-a { margin-left: 7px; font-size: 14px; width: 16px; align-items: flex-start; }
.t { text-align: center; font-size: 13px; color: #222; }
.w8 { width: 8px; } .w12 { width: 12px; } .w14 { width: 14px; } .w22 { width: 22px; } .w24 { width: 24px; }
.ctrf { display: flex; align-items: center; justify-content: center; height: 21px; flex: none; }
.bold { font-weight: 700; font-family: "Liberation Sans", sans-serif; }
.ital { font-style: italic; font-family: "Liberation Serif", serif; }
.und { text-decoration: underline; }
.vsep { width: 1px; height: 21px; background: #d4d4d4; margin: 0 2px; flex: none; }
.colA { display: flex; flex-direction: column; align-items: center; }
.colA b { font-weight: 500; font-size: 14px; line-height: 14px; }
.colA i { width: 15px; height: 3px; background: #1a1ad8; margin-top: 1px; }
.pressed { background: #e4e4e4; border: 1px solid #777; border-radius: 4px; box-sizing: border-box; width: 22px; margin-right: 1px; margin-left: 1px; padding-top: 5px; }

.alignb { display: flex; padding-left: 7px; }
.alignl { width: 127px; flex: none; }
.alignl .vsep { margin: 0 1px; }
.bigsep { width: 1px; height: 58px; margin-top: 6px; background: #d4d4d4; flex: none; }
.alignr { margin-left: 10px; }
.srow2 { display: flex; align-items: center; gap: 3px; height: 21px; margin-top: 7px; font-size: 11.300px; white-space: nowrap; }
.srow2.merge { margin-top: 9px; }
.mc { margin-left: 15px; }

.g-num .body { padding-left: 9px; }
.g-num .vsep { margin: 0 1px; }
.gbox { width: 134px; padding-left: 3px; }
.numg { font-size: 15px; }
.g-num .r2 .numg:first-child { width: 22px; text-align: center; padding-right: 3px; box-sizing: border-box; }
.pct { margin-left: 4px; font-size: 16px; }
.comma { font-weight: 900; font-size: 20px; line-height: 12px; font-family: "Liberation Serif", serif; margin-top: -6px; }

.styb { display: flex; padding-left: 10px; }
.styb .big + .big { margin-left: 2px; }
.gallery { margin: 7px 0 0 2px; width: 224px; height: 57px; box-sizing: border-box; border: 1px solid #8c8c8c; border-radius: 5px; display: flex; overflow: hidden; }
.gcells { width: 201px; display: grid; grid-template-columns: 99.500px 100px; grid-template-rows: 28px 27px; }
.st { display: flex; align-items: center; padding-left: 4px; font-size: 13px; margin: 3px; box-sizing: border-box; }
.normal { margin: 1px 0 0 1px; background: #fff; border: 2px solid #7a7a7a; color: #111; padding-left: 5px; }
.bad { background: #ff9c9c; color: #9c0006; margin-left: 3px; width: 94px; }
.good { background: #9edc9c; color: #0f4f10; }
.neutral { background: #ffd54f; color: #7a3e00; margin-left: 3px; width: 94px; }
.gbtn { width: 22px; margin-left: auto; border-left: 1px solid #333; display: flex; align-items: center; justify-content: center; padding-bottom: 6px; box-sizing: border-box; }

.cellb { display: flex; padding-left: 7px; gap: 1px; }
.editb { display: flex; padding-left: 12px; }
.editl { width: 95px; margin-left: 0; }
.srow3 { height: 23.500px; display: flex; align-items: center; gap: 4px; font-size: 11.300px; white-space: nowrap; }
.sig { font-size: 17px; line-height: 18px; width: 15px; text-align: center; color: #333; }
.asc { margin-left: 15px; }
.editb .big + .big { margin-left: -1px; }
.onec { display: flex; justify-content: center; }
.anab { display: flex; padding-left: 8px; }
.collapse { position: absolute; right: 8px; top: 78px; }

/* formula */
.fbar { height: 21px; margin: 8px 8px 7px 7px; display: flex; align-items: stretch; flex: none; }
.namebox { width: 96px; box-sizing: border-box; background: #fff; border: 1px solid #bdbdbd; border-radius: 4px; display: flex; align-items: center; justify-content: space-between; padding: 0 6px 0 5px; font-size: 12px; }
.fdots { width: 19px; display: flex; flex-direction: column; justify-content: center; align-items: center; gap: 2px; }
.fdots i { width: 2px; height: 2px; background: #333; }
.fxbox { width: 79px; box-sizing: border-box; background: #fff; border: 1px solid #bdbdbd; border-radius: 4px; display: flex; align-items: center; padding-left: 5px; gap: 9px; }
.fx { font-family: "Liberation Serif", serif; font-style: italic; font-weight: 700; font-size: 15px; line-height: 15px; margin-left: 3px; margin-right: -6px; }
.finput { margin-left: 5px; flex: 1; background: #fff; border: 1px solid #bdbdbd; border-radius: 4px; display: flex; align-items: center; justify-content: flex-end; padding-right: 4px; }

/* sheet */
.sheet { height: 781px; display: flex; flex: none; }
.grid { width: 1900px; background: #fff; display: flex; flex-direction: column; }
.colhead { height: 17.400px; display: flex; background: #d9d9d9; border-bottom: 1px solid #9e9e9e; box-sizing: border-box; flex: none; }
.corner { width: 27px; position: relative; flex: none; }
.corner i { position: absolute; right: 2px; bottom: 1px; width: 0; height: 0; border-left: 11px solid transparent; border-bottom: 11px solid #b3b3b3; }
.letters { display: grid; flex: 1; }
.letters span { text-align: center; font: 12px/16px Lato, sans-serif; color: #333; position: relative; }
.letters span::after { content: ""; position: absolute; right: 0; bottom: 0; height: 4px; width: 1px; background: #a9a9a9; }
.line { display: flex; flex: none; }
.rh { width: 27px; flex: none; box-sizing: border-box; background: #e1e1e1 linear-gradient(#b9b9b9,#b9b9b9) no-repeat right bottom / 16px 1px; font: 12px/1 Lato, sans-serif; color: #333; border-right: 1px solid #c4c4c4; padding-right: 3px; display: flex; align-items: center; justify-content: center; }
.cells { display: grid; flex: 1; grid-template-rows: 1fr; }
.c { box-sizing: border-box; padding: 0 2.500px; font: 12px/15px Lato, sans-serif; color: #000; white-space: nowrap; overflow: visible; display: flex; align-items: center; min-width: 0; -webkit-text-stroke: .15px #000; }
.hd { background: #b5b5b5; }
.b { font-weight: 700; }
.ctr { justify-content: center; }
.rgt { justify-content: flex-end; }
.u { text-decoration: underline; }
.blue { color: #1414e0; -webkit-text-stroke: .15px #1414e0; }
.yel { background: #ffff99; }
.arrow { font-size: 9px; padding: 0; }
.tL { border-left: 2px solid #000; margin-left: -1px; padding-left: 2px; }
.tR { border-right: 2px solid #000; margin-right: -1px; padding-right: 1.500px; }
.tT { border-top: 2px solid #000; }
.tB { border-bottom: 2px solid #000; }
.sB { border-bottom: 2px solid #000; }
.dR { border-right: 1px dotted #222; }
.dB { border-bottom: 1px dotted #222; }

.vscroll { width: 20px; background: #ececec; display: flex; flex-direction: column; align-items: center; padding: 4px 0 3px; box-sizing: border-box; }
.tri { width: 0; height: 0; border-left: 5px solid transparent; border-right: 5px solid transparent; }
.tri.up { border-bottom: 7px solid #333; }
.tri.dn { border-top: 7px solid #333; }
.vtrack { flex: 1; display: flex; flex-direction: column; justify-content: flex-end; padding-bottom: 4px; }
.vthumb { width: 9px; height: 371px; border-radius: 5px; background: #454545; margin-left: 1px; }

/* tabs */
.tabbar { height: 30px; background: #dedede; border-bottom: 1px solid #fff; display: flex; flex: none; box-sizing: content-box; }
.tnav { width: 90px; display: flex; align-items: center; padding-left: 23px; gap: 24px; box-sizing: border-box; flex: none; padding-bottom: 2px; }
.tstrip { width: 1622px; flex: none; display: flex; overflow: hidden; align-items: flex-start; }
.tab { height: 23px; margin-top: 3px; flex: none; box-sizing: border-box; display: flex; align-items: center; justify-content: center; font-size: 12.900px; color: #111; border-radius: 5px; position: relative; white-space: nowrap; }
.tab::after { content: ""; position: absolute; right: -5px; top: 3px; height: 18px; width: 1px; background: #bdbdbd; }
.tab.yellow { background: #ffff99; }
.tab.purple { background: #2e0b57; color: #d6c8ea; justify-content: center; overflow: visible; }
.tab.purple:last-child { justify-content: flex-start; padding-left: 8px; }
.tab.plain { background: none; }
.tab.active { height: 26px; margin-top: 0; background: #fdfde8; border-radius: 5px 5px 4px 4px; font-weight: 500; align-items: flex-start; padding-top: 4px; box-shadow: 0 1px 2px rgba(0,0,0,.25); font-size: 13.200px; }
.tab.active span { border-bottom: 2px solid #1c6b2c; line-height: 18px; }
.tctl { flex: 1; display: flex; align-items: center; padding-bottom: 2px; }
.more { display: flex; gap: 1.500px; margin-left: 8px; }
.more i { width: 2.500px; height: 2.500px; background: #222; border-radius: 50%; }
.plus { margin-left: 19px; }
.vdots { display: flex; flex-direction: column; gap: 2px; margin-left: 23px; }
.vdots i { width: 3px; height: 3px; background: #222; }
.hscroll { margin-left: 20px; display: flex; align-items: center; }
.hthumb { width: 70px; height: 11px; background: #3a3a3a; border-radius: 6px; margin: 0 4px; }
.tl { width: 0; height: 0; border-top: 5px solid transparent; border-bottom: 5px solid transparent; border-right: 6px solid #333; }
.tr { width: 0; height: 0; border-top: 5px solid transparent; border-bottom: 5px solid transparent; border-left: 6px solid #333; }

/* status */
.status { height: 19px; background: #d8d8d8; display: flex; align-items: center; font-size: 10.500px; color: #333; flex: none; border-bottom: 1px solid #aaa; box-sizing: content-box; margin-bottom: -1px; }
.ready { margin-left: 11px; width: 26px; }
.macro { margin-left: 20px; }
.acc { margin-left: 15px; }
.accT { margin-left: 2px; font-weight: 700; }
.sright { margin-left: auto; display: flex; align-items: center; height: 19px; }
.vb { width: 38px; height: 19px; display: flex; align-items: center; justify-content: center; }
.vb.on { background: #bdbdbd; }
.zm { font-size: 13px; width: 10px; text-align: center; margin-left: 4px; }
.zslider { width: 94px; height: 1px; background: #333; margin-left: 3px; position: relative; }
.zthumb { position: absolute; left: 39px; top: -5px; width: 4px; height: 11px; background: #333; }
.ztick { position: absolute; left: 46px; top: -3px; width: 1px; height: 7px; background: #555; }
.zm + .zslider + .zm { margin-left: 3px; }
.zpct { width: 42px; text-align: center; font-size: 10px; padding-right: 5px; box-sizing: border-box; }

/* taskbar */
.taskbar { height: 45px; position: relative; display: flex; align-items: center; flex: none; overflow: hidden; color: #22303a; }
.noise { position: absolute; left: 0; top: 0; }
.weather { position: relative; display: flex; align-items: center; margin-left: 19px; gap: 5px; width: 680px; box-sizing: border-box; flex: none; }
.wtext { display: flex; flex-direction: column; font-size: 11px; line-height: 15px; padding-top: 1px; }
.tcenter { position: relative; display: flex; align-items: center; flex: none; }
.tsearch { margin-left: 14px; width: 203px; height: 27px; border-radius: 14px; background: #d4fbff; display: flex; align-items: center; padding-left: 9px; box-sizing: border-box; font-size: 12.500px; gap: 9px; color: #222; }
.monkey { margin-left: auto; margin-right: 3px; }
.tv { margin-left: 13px; }
.pin { margin-left: 18px; }
.fol { margin-left: 18px; }
.pinw { margin-left: 19px; position: relative; display: block; }
.pinw i { position: absolute; left: 50%; margin-left: -3px; bottom: -6px; width: 6px; height: 2.500px; border-radius: 2px; background: #555; }
.snip { margin-left: 18px; }
.nb { margin-left: 20px; }
.tray { position: relative; margin-left: auto; display: flex; align-items: center; padding-right: 18px; }
.net { margin-left: 21px; }
.vol { margin-left: 7px; }
.clock { margin-left: 16px; display: flex; flex-direction: column; align-items: flex-end; font-size: 11.500px; line-height: 15px; width: 52px; }
</style>
